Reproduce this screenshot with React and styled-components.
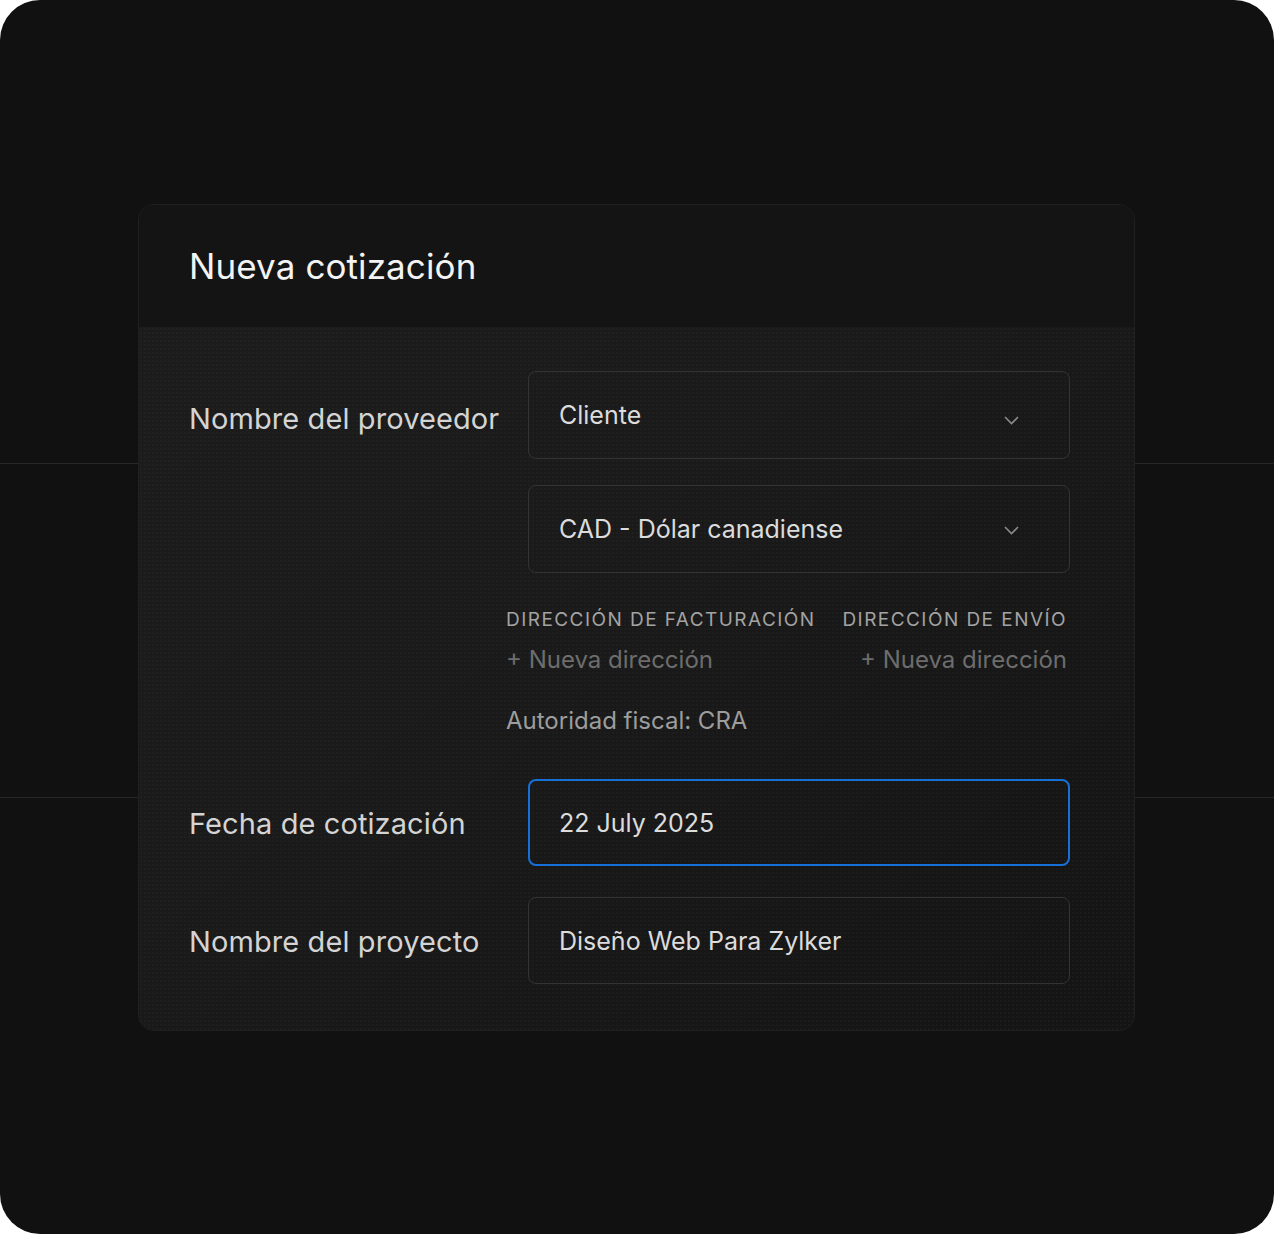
import React from 'react';
import styled, { createGlobalStyle } from 'styled-components';

const GlobalStyle = createGlobalStyle`
  body {
    margin: 0;
    background: #ffffff;
    font-family: Inter, "Noto Sans", sans-serif;
  }
`;

// fondo oscuro con las dos lineas horizontales que cruzan detras de la tarjeta
const Frame = styled.div`
  width: 1274px;
  height: 1234px;
  box-sizing: border-box;
  border-radius: 40px;
  padding: 204px 139px 0 138px;
  background:
    linear-gradient(#272727, #272727) 0 463px / 100% 1px no-repeat,
    linear-gradient(#272727, #272727) 0 797px / 100% 1px no-repeat,
    #111111;
`;

const Card = styled.div`
  width: 997px;
  border: 1px solid #202020;
  border-radius: 16px;
  overflow: hidden;
  box-sizing: border-box;
`;

const Header = styled.div`
  height: 122px;
  display: flex;
  align-items: center;
  padding-left: 50px;
  background: #141414;
`;

const Title = styled.h1`
  margin: 0;
  font-size: 35px;
  font-weight: 400;
  color: #f3f3f3;
  letter-spacing: 0.1px;
`;

const Body = styled.div`
  padding: 44px 64px 46px 50px;
  background:
    radial-gradient(rgba(255, 255, 255, 0.025) 1px, transparent 1px) 0 0 / 4px 4px,
    linear-gradient(140deg, #1c1c1c 0%, #1a1a1a 40%, #141414 100%);
  display: grid;
  grid-template-columns: 339px 542px;
  align-items: center;
`;

const Label = styled.div`
  grid-column: 1;
  font-size: 29px;
  letter-spacing: 0.1px;
  color: #d4d4d4;
  padding-top: ${(p) => p.$nudge || 0}px;
`;

const Field = styled.div`
  grid-column: 2;
  height: ${(p) => p.$h || 88}px;
  box-sizing: border-box;
  border: ${(p) => (p.$active ? '2px solid #1670d8' : '1px solid #333333')};
  border-radius: 8px;
  display: flex;
  align-items: center;
  justify-content: space-between;
  padding: 0 50px 0 ${(p) => (p.$active ? 29 : 30)}px;
  margin-top: ${(p) => p.$mt || 0}px;
  font-size: 25px;
  color: #dcdcdc;
`;

const Chevron = styled.svg`
  width: 15px;
  height: 9px;
  margin-top: ${(p) => p.$off || 0}px;
  flex-shrink: 0;
`;

const Address = styled.div`
  grid-column: 2;
  margin: 35px 3px 0 -22px;
  display: flex;
  flex-direction: column;
`;

const AddressCols = styled.div`
  display: flex;
  justify-content: space-between;
`;

const AddressCol = styled.div`
  display: flex;
  flex-direction: column;
  align-items: ${(p) => (p.$right ? 'flex-end' : 'flex-start')};
  gap: 13px;
`;

const Caps = styled.div`
  font-size: 19px;
  line-height: 24px;
  letter-spacing: 1.45px;
  text-transform: uppercase;
  color: #a3a3a3;
`;

const AddLink = styled.div`
  font-size: 24px;
  line-height: 30px;
  color: #6d6d6d;
`;

const Fiscal = styled.div`
  margin-top: 31px;
  font-size: 24px;
  line-height: 30px;
  color: #9d9d9d;
`;

function Arrow({ off }) {
  return (
    <Chevron $off={off} viewBox="0 0 15 9" fill="none">
      <polyline points="1,1 7.5,7.5 14,1" stroke="#8a8a8a" strokeWidth="1.6" />
    </Chevron>
  );
}

export default function App() {
  return (
    <Frame>
      <GlobalStyle />
      <Card>
        <Header>
          <Title>Nueva cotización</Title>
        </Header>
        <Body>
          <Label $nudge={6}>Nombre del proveedor</Label>
          <Field>
            Cliente
            <Arrow off={10} />
          </Field>

          <Field $mt={26}>
            CAD - Dólar canadiense
            <Arrow off={3} />
          </Field>

          <Address>
            <AddressCols>
              <AddressCol>
                <Caps>Dirección de facturación</Caps>
                <AddLink>+ Nueva dirección</AddLink>
              </AddressCol>
              <AddressCol $right>
                <Caps>Dirección de envío</Caps>
                <AddLink>+ Nueva dirección</AddLink>
              </AddressCol>
            </AddressCols>
            <Fiscal>Autoridad fiscal: CRA</Fiscal>
          </Address>

          <Label $nudge={2} style={{ marginTop: 43 }}>Fecha de cotización</Label>
          <Field $active $h={87} $mt={43}>
            22 July 2025
          </Field>

          <Label $nudge={2} style={{ marginTop: 31 }}>Nombre del proyecto</Label>
          <Field $h={87} $mt={31}>
            Diseño Web Para Zylker
          </Field>
        </Body>
      </Card>
    </Frame>
  );
}
